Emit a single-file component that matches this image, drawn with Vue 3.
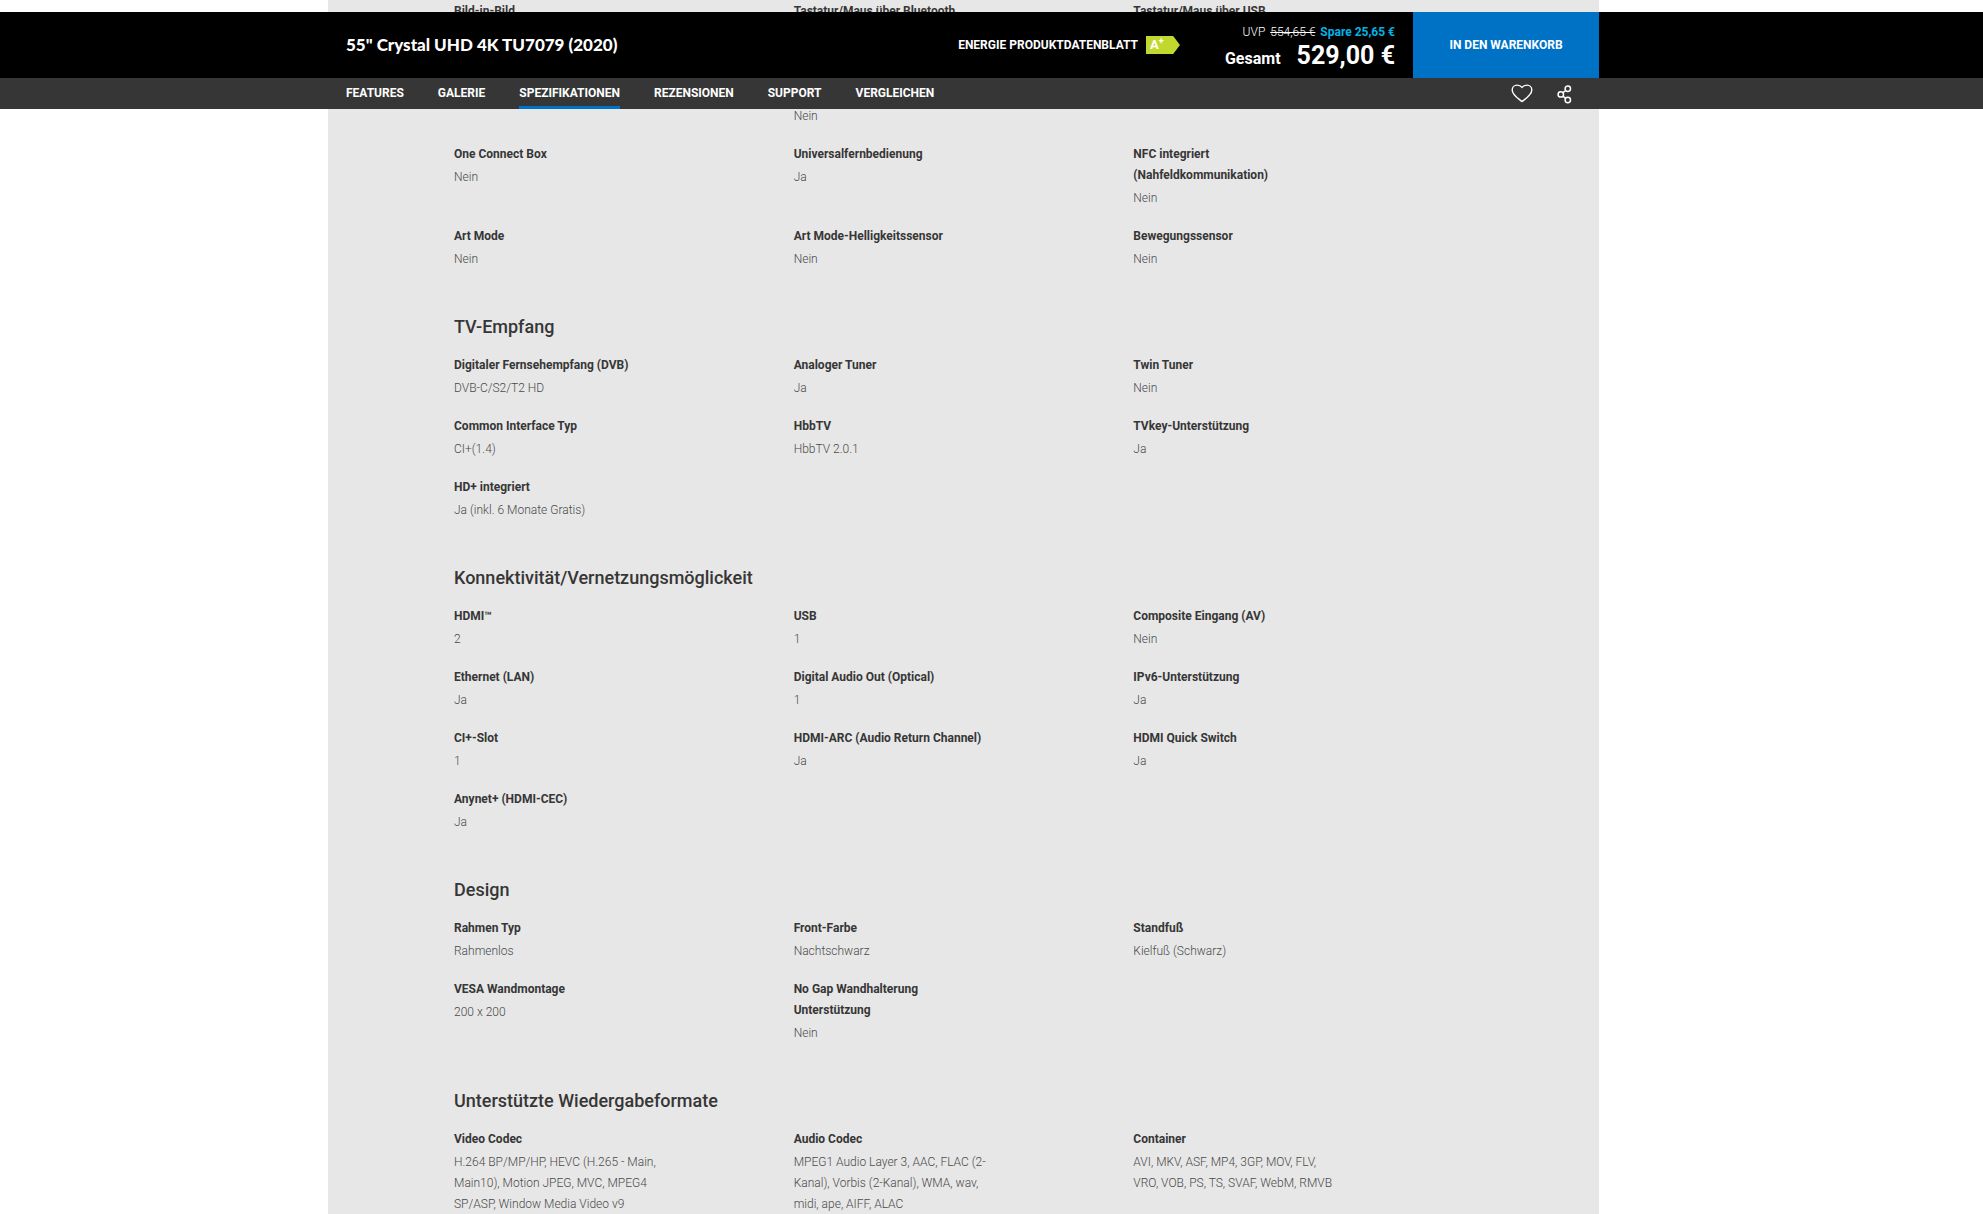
<script setup>
import { ref } from 'vue'

const tabs = ['FEATURES', 'GALERIE', 'SPEZIFIKATIONEN', 'REZENSIONEN', 'SUPPORT', 'VERGLEICHEN']
const activeTab = ref('SPEZIFIKATIONEN')
const liked = ref(false)

// An item without a label only reserves the room of two label lines
const sections = [
  {
    title: '',
    items: [
      { label: 'Bild-in-Bild', value: '' },
      { label: 'Tastatur/Maus über Bluetooth', value: '' },
      { label: 'Tastatur/Maus über USB', value: '' },
      { label: '', value: '' },
      { label: '', value: 'Nein' },
      { label: '', value: '' },
      { label: 'One Connect Box', value: 'Nein' },
      { label: 'Universalfernbedienung', value: 'Ja' },
      { label: 'NFC integriert\n(Nahfeldkommunikation)', value: 'Nein' },
      { label: 'Art Mode', value: 'Nein' },
      { label: 'Art Mode-Helligkeitssensor', value: 'Nein' },
      { label: 'Bewegungssensor', value: 'Nein' }
    ]
  },
  {
    title: 'TV-Empfang',
    items: [
      { label: 'Digitaler Fernsehempfang (DVB)', value: 'DVB-C/S2/T2 HD' },
      { label: 'Analoger Tuner', value: 'Ja' },
      { label: 'Twin Tuner', value: 'Nein' },
      { label: 'Common Interface Typ', value: 'CI+(1.4)' },
      { label: 'HbbTV', value: 'HbbTV 2.0.1' },
      { label: 'TVkey-Unterstützung', value: 'Ja' },
      { label: 'HD+ integriert', value: 'Ja (inkl. 6 Monate Gratis)' }
    ]
  },
  {
    title: 'Konnektivität/Vernetzungsmöglickeit',
    items: [
      { label: 'HDMI™', value: '2' },
      { label: 'USB', value: '1' },
      { label: 'Composite Eingang (AV)', value: 'Nein' },
      { label: 'Ethernet (LAN)', value: 'Ja' },
      { label: 'Digital Audio Out (Optical)', value: '1' },
      { label: 'IPv6-Unterstützung', value: 'Ja' },
      { label: 'CI+-Slot', value: '1' },
      { label: 'HDMI-ARC (Audio Return Channel)', value: 'Ja' },
      { label: 'HDMI Quick Switch', value: 'Ja' },
      { label: 'Anynet+ (HDMI-CEC)', value: 'Ja' }
    ]
  },
  {
    title: 'Design',
    items: [
      { label: 'Rahmen Typ', value: 'Rahmenlos' },
      { label: 'Front-Farbe', value: 'Nachtschwarz' },
      { label: 'Standfuß', value: 'Kielfuß (Schwarz)' },
      { label: 'VESA Wandmontage', value: '200 x 200' },
      { label: 'No Gap Wandhalterung\nUnterstützung', value: 'Nein' }
    ]
  },
  {
    title: 'Unterstützte Wiedergabeformate',
    items: [
      { label: 'Video Codec', value: 'H.264 BP/MP/HP, HEVC (H.265 - Main,\nMain10), Motion JPEG, MVC, MPEG4\nSP/ASP, Window Media Video v9' },
      { label: 'Audio Codec', value: 'MPEG1 Audio Layer 3, AAC, FLAC (2-\nKanal), Vorbis (2-Kanal), WMA, wav,\nmidi, ape, AIFF, ALAC' },
      { label: 'Container', value: 'AVI, MKV, ASF, MP4, 3GP, MOV, FLV,\nVRO, VOB, PS, TS, SVAF, WebM, RMVB' }
    ]
  }
]
</script>

<template>
  <div class="page">
    <header class="sticky">
      <div class="product-bar">
        <div class="inner">
          <h1 class="product-name">55" Crystal UHD 4K TU7079 (2020)</h1>
          <div class="buy">
            <a class="energy" href="#">
              <span>ENERGIE PRODUKTDATENBLATT</span>
              <span class="energy-label">A<sup>+</sup></span>
            </a>
            <div class="price">
              <p class="price-old">UVP <s>554,65 €</s> <b>Spare 25,65 €</b></p>
              <p class="price-now"><span>Gesamt</span><strong>529,00 €</strong></p>
            </div>
            <button class="cart" type="button">IN DEN WARENKORB</button>
          </div>
        </div>
      </div>
      <div class="nav-bar">
        <div class="inner">
          <nav class="tabs">
            <a
              v-for="tab in tabs"
              :key="tab"
              href="#"
              :class="{ active: tab === activeTab }"
              @click.prevent="activeTab = tab"
            >{{ tab }}</a>
          </nav>
          <div class="actions">
            <button type="button" aria-label="Merken" :aria-pressed="liked" @click="liked = !liked">
              <svg width="22" height="20" viewBox="0 0 22 20" fill="none" stroke="#fff" stroke-width="1.4" stroke-linejoin="round">
                <path d="M11 17.6C7.6 14.6 1.2 11 1.2 5.9C1.2 3.1 3.4 1.1 6 1.1C8.2 1.1 10 2 11 3.4C12 2 13.8 1.1 16 1.1C18.6 1.1 20.8 3.1 20.8 5.9C20.8 11 14.4 14.6 11 17.6Z" />
              </svg>
            </button>
            <button type="button" aria-label="Teilen">
              <svg width="15" height="20" viewBox="0 0 15 20" fill="none" stroke="#fff" stroke-width="1.5">
                <circle cx="3.8" cy="10.4" r="2.7" />
                <circle cx="10.8" cy="4.8" r="2.7" />
                <circle cx="10.8" cy="16" r="2.7" />
                <path d="M5.9 8.7L8.7 6.5M5.9 12.1L8.7 14.3" />
              </svg>
            </button>
          </div>
        </div>
      </div>
    </header>

    <main class="specs">
      <section v-for="section in sections" :key="section.title" class="section">
        <h2 v-if="section.title">{{ section.title }}</h2>
        <div class="grid">
          <dl v-for="(item, i) in section.items" :key="i" :class="{ unlabeled: !item.label }">
            <dt>{{ item.label }}</dt>
            <dd>{{ item.value }}</dd>
          </dl>
        </div>
      </section>
    </main>
  </div>
</template>

<style>
body {
  margin: 0;
  background: #fff;
}
</style>

<style scoped>
.page {
  height: 100vh;
  overflow-y: auto;
  scrollbar-width: none;
  box-sizing: border-box;
  padding-right: 56px;
  font-family: Roboto, "Noto Sans", sans-serif;
  font-size: 12px;
  line-height: 21px;
  color: #363636;
}
h1, h2, p, dl, dd {
  margin: 0;
}
a {
  color: inherit;
  text-decoration: none;
}
button {
  border: 0;
  padding: 0;
  background: none;
  color: inherit;
  font: inherit;
  cursor: pointer;
}

.sticky {
  position: fixed;
  top: 12px;
  left: 0;
  right: 0;
  z-index: 10;
  color: #fff;
}
.product-bar,
.nav-bar {
  padding-right: 56px;
}
.product-bar {
  background: #000;
}
.nav-bar {
  background: #363636;
}
.inner {
  display: flex;
  justify-content: space-between;
  max-width: 1271px;
  margin: 0 auto;
  padding-left: 18px;
  box-sizing: border-box;
}
.product-bar .inner {
  height: 66px;
  align-items: center;
}
.product-name {
  font-family: Lato, sans-serif;
  font-size: 17px;
  line-height: 24px;
  font-weight: 900;
}
.buy {
  display: flex;
  align-items: center;
  height: 100%;
}
.energy {
  display: flex;
  align-items: center;
  gap: 8px;
  margin-right: 45px;
  font-weight: 700;
}
.energy-label {
  box-sizing: border-box;
  width: 34px;
  height: 18px;
  padding-left: 4px;
  background: #c1d82f;
  clip-path: polygon(0 0, 80% 0, 100% 50%, 80% 100%, 0 100%);
  font-size: 13px;
  line-height: 18px;
}
.energy-label sup {
  font-size: 9px;
  line-height: 1px;
}
.price {
  margin-right: 18px;
  padding-top: 6px;
  text-align: right;
}
.price-old {
  line-height: 18px;
  font-weight: 300;
}
.price-old s {
  margin: 0 2px;
}
.price-old b {
  color: #00b3e3;
  font-weight: 700;
}
.price-now {
  display: flex;
  align-items: baseline;
  justify-content: flex-end;
  gap: 16px;
  line-height: 30px;
}
.price-now span {
  font-size: 16px;
  font-weight: 700;
}
.price-now strong {
  font-size: 25px;
  font-weight: 700;
}
.cart {
  width: 186px;
  height: 100%;
  background: #0072c6;
  font-weight: 700;
}

.nav-bar .inner {
  height: 31px;
}
.tabs {
  display: flex;
  gap: 34px;
}
.tabs a {
  box-sizing: border-box;
  height: 31px;
  padding-top: 1px;
  border-bottom: 3px solid transparent;
  line-height: 28px;
  font-weight: 700;
}
.tabs a.active {
  border-color: #0072c6;
}
.actions {
  display: flex;
  align-items: center;
  gap: 24px;
  padding-right: 27px;
}
.actions svg {
  display: block;
}

.specs {
  max-width: 1271px;
  margin: 0 auto;
  padding: 1px 126px 0;
  box-sizing: border-box;
  background: #e7e7e7;
}
.section + .section {
  padding-top: 43px;
}
.section h2 {
  margin-bottom: 15px;
  font-size: 18px;
  line-height: 27px;
  font-weight: 500;
}
.grid {
  display: grid;
  grid-template-columns: repeat(3, 1fr);
  row-gap: 17px;
}
dt,
dd {
  min-height: 21px;
  white-space: pre-line;
}
dt {
  margin-bottom: 2px;
  font-weight: 700;
}
.unlabeled dt {
  min-height: 42px;
}
dd {
  color: #4a4a4a;
  font-weight: 300;
}
</style>
